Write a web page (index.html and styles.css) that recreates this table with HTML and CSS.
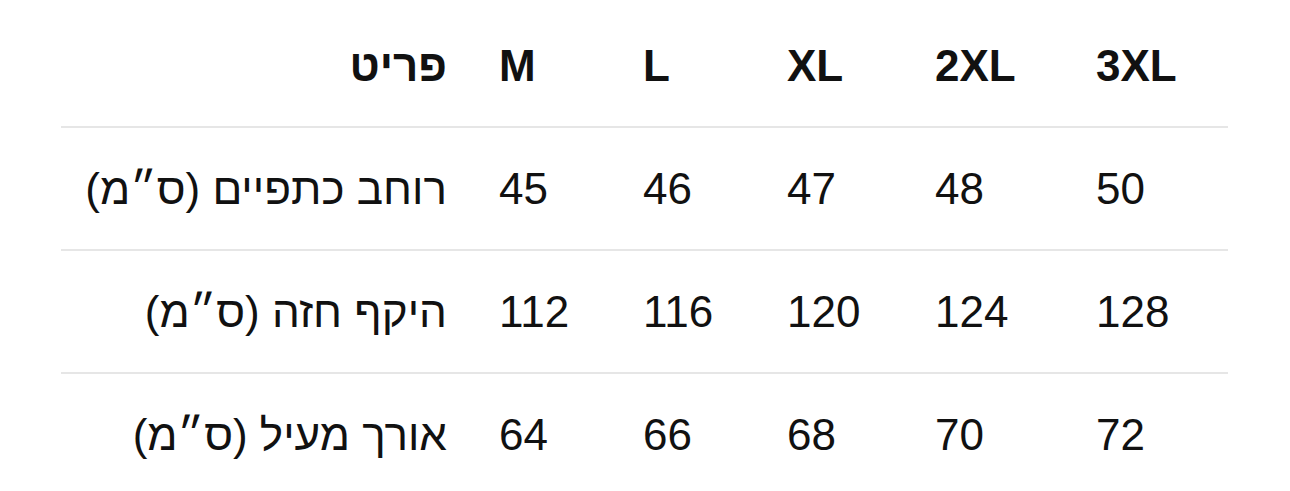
FILE: index.html
```html
<!DOCTYPE html>
<html lang="he">
<head>
<meta charset="utf-8">
<title>טבלת מידות</title>
<link rel="stylesheet" href="styles.css">
</head>
<body>
<div class="page">
  <table class="sizes">
    <colgroup>
      <col class="c-label">
      <col class="c-m">
      <col class="c-l">
      <col class="c-xl">
      <col class="c-2xl">
      <col class="c-3xl">
    </colgroup>
    <thead>
      <tr>
        <th class="label" dir="rtl">פריט</th>
        <th>M</th>
        <th>L</th>
        <th>XL</th>
        <th>2XL</th>
        <th>3XL</th>
      </tr>
    </thead>
    <tbody>
      <tr>
        <td class="label" dir="rtl">רוחב כתפיים (ס״מ)</td>
        <td>45</td>
        <td>46</td>
        <td>47</td>
        <td>48</td>
        <td>50</td>
      </tr>
      <tr>
        <td class="label" dir="rtl">היקף חזה (ס״מ)</td>
        <td>112</td>
        <td>116</td>
        <td>120</td>
        <td>124</td>
        <td>128</td>
      </tr>
      <tr class="last">
        <td class="label" dir="rtl">אורך מעיל (ס״מ)</td>
        <td>64</td>
        <td>66</td>
        <td>68</td>
        <td>70</td>
        <td>72</td>
      </tr>
    </tbody>
  </table>
</div>
</body>
</html>
```

FILE: styles.css
```css
html, body {
  margin: 0;
  padding: 0;
  background: #ffffff;
}

body {
  font-family: "Liberation Sans", Arial, sans-serif;
  color: #111111;
}

.page {
  padding: 5px 62px 0 61px;
}

.sizes {
  width: 100%;
  table-layout: fixed;
  border-collapse: collapse;
  font-size: 44px;
  line-height: 51px;
}

.c-label { width: 412px; }
.c-m { width: 144px; }
.c-l { width: 144px; }
.c-xl { width: 148px; }
.c-2xl { width: 161px; }
.c-3xl { width: 158px; }

.sizes th,
.sizes td {
  padding: 35px 0 35px 26px;
  text-align: left;
  vertical-align: middle;
  white-space: nowrap;
  border-bottom: 2px solid #e6e6e6;
}

.sizes th {
  font-weight: 700;
}

.sizes td {
  font-weight: 400;
}

.sizes .label {
  text-align: right;
  padding-left: 0;
  padding-right: 26px;
}

.sizes tr.last td {
  border-bottom: none;
}
```
